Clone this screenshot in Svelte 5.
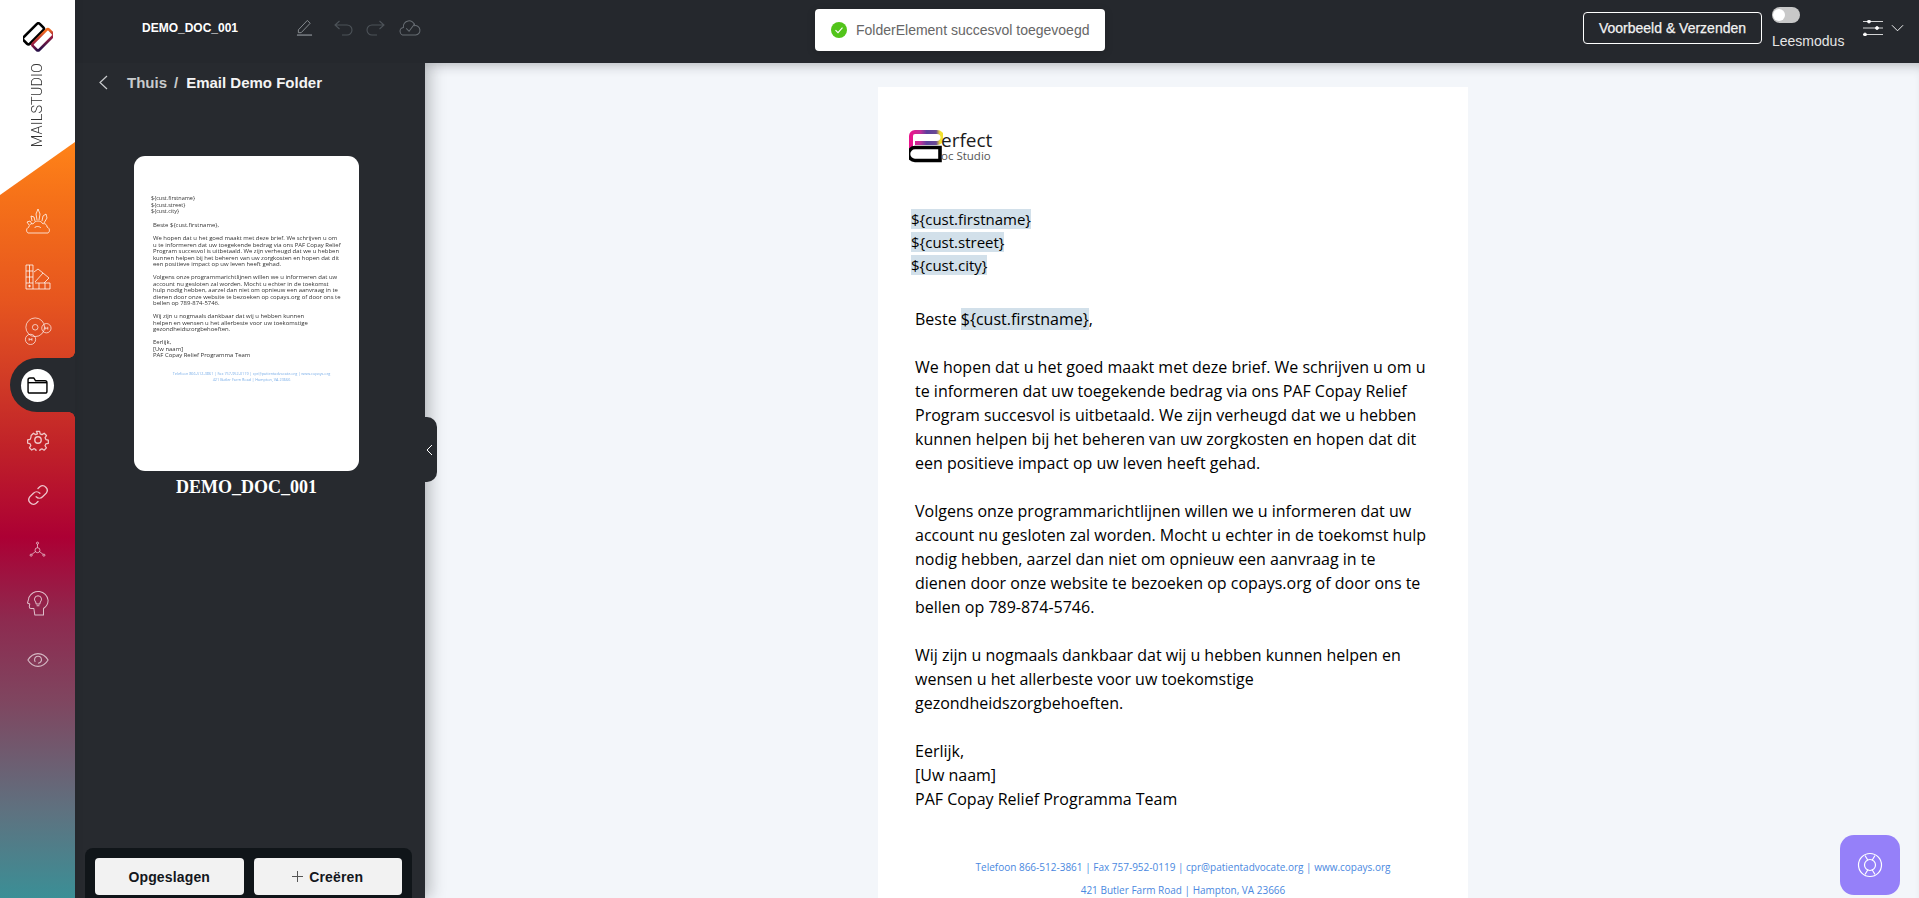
<script>
  const thumbParas = [
    ['Beste ${cust.firstname},'],
    ['We hopen dat u het goed maakt met deze brief. We schrijven u om','u te informeren dat uw toegekende bedrag via ons PAF Copay Relief','Program succesvol is uitbetaald. We zijn verheugd dat we u hebben','kunnen helpen bij het beheren van uw zorgkosten en hopen dat dit','een positieve impact op uw leven heeft gehad.'],
    ['Volgens onze programmarichtlijnen willen we u informeren dat uw','account nu gesloten zal worden. Mocht u echter in de toekomst','hulp nodig hebben, aarzel dan niet om opnieuw een aanvraag in te','dienen door onze website te bezoeken op copays.org of door ons te','bellen op 789-874-5746.'],
    ['Wij zijn u nogmaals dankbaar dat wij u hebben kunnen','helpen en wensen u het allerbeste voor uw toekomstige','gezondheidszorgbehoeften.'],
    ['Eerlijk,','[Uw naam]','PAF Copay Relief Programma Team']
  ];
  const docParas = [
    ['We hopen dat u het goed maakt met deze brief. We schrijven u om u','te informeren dat uw toegekende bedrag via ons PAF Copay Relief','Program succesvol is uitbetaald. We zijn verheugd dat we u hebben','kunnen helpen bij het beheren van uw zorgkosten en hopen dat dit','een positieve impact op uw leven heeft gehad.'],
    ['Volgens onze programmarichtlijnen willen we u informeren dat uw','account nu gesloten zal worden. Mocht u echter in de toekomst hulp','nodig hebben, aarzel dan niet om opnieuw een aanvraag in te','dienen door onze website te bezoeken op copays.org of door ons te','bellen op 789-874-5746.'],
    ['Wij zijn u nogmaals dankbaar dat wij u hebben kunnen helpen en','wensen u het allerbeste voor uw toekomstige','gezondheidszorgbehoeften.'],
    ['Eerlijk,','[Uw naam]','PAF Copay Relief Programma Team']
  ];
</script>

<div class="app">
  <aside class="rail">
    <div class="brand">
      <svg class="logo" viewBox="0 0 30 30" width="30" height="30" fill="none">
        <defs><linearGradient id="lg" x1="0.1" y1="1" x2="1" y2="0.2"><stop offset="0" stop-color="#2a1048"/><stop offset="0.5" stop-color="#9a1a40"/><stop offset="1" stop-color="#f06a20"/></linearGradient></defs>
        <g transform="rotate(-45 15 15)">
          <rect x="2.500" y="5" width="23" height="9" rx="2" stroke="#000" stroke-width="2.600"/>
          <rect x="5" y="16" width="23" height="9" rx="2" stroke="url(#lg)" stroke-width="2.600"/>
        </g>
      </svg>
      <span class="brand-text">MAILSTUDIO</span>
    </div>
    <div class="rail-fill">
      <nav class="icons">
        <svg class="ic" viewBox="0 0 26 26" fill="none" stroke="#fff" stroke-opacity=".85" stroke-width=".9"><path d="M3 25h20c2-1 2-5-1-6 0-3-3-4-4-3-1-2-3-3-5-3s-4 1-5 3c-2-1-4 1-4 3-3 1-3 5-1 6Z"/><path d="M9.500 20c1-2 5-2 6.500 0"/><path d="M7 13 6 8l3 1 1 4M12 12l-1-6 2-5 2 5-1 6M17 13l1-5 3-2 1 4-3 5M4 17l-2-3 3-1 2 3"/></svg>
        <svg class="ic" viewBox="0 0 26 26" fill="none" stroke="#fff" stroke-opacity=".85" stroke-width=".9"><path d="M1 1h7v24H1zM1 7h7M1 13h7M1 19h7M4.500 1v18"/><path d="M9 8l4-3 5 4-8 9M18 9l6 5-5 5"/><path d="M10 19h15v6H8M14 19v6M20 19v6"/><circle cx="4.500" cy="22" r=".8" fill="#fff"/></svg>
        <svg class="ic mol" viewBox="0 0 30 30" fill="none" stroke="#fff" stroke-opacity=".8" stroke-width=".9"><circle cx="12" cy="11" r="10"/><circle cx="12" cy="11" r="3"/><circle cx="24" cy="12" r="5"/><circle cx="7" cy="24" r="5.500"/><path d="M22.500 10.500v3M25.500 10.500v3M22.500 12h3M5.500 22.500v3M8.500 22.500v3M5.500 24h3"/></svg>
      </nav>
      <div class="active-wrap">
        <div class="active-pill">
          <span class="active-dot">
            <svg viewBox="0 0 22 18" width="21" height="17" fill="none" stroke="#000" stroke-width="1.500" stroke-linejoin="round"><path d="M1 3a2 2 0 0 1 2-2h4l2 3h10a2 2 0 0 1 2 2v9a2 2 0 0 1-2 2H3a2 2 0 0 1-2-2Z"/><path d="M1 6h20"/></svg>
          </span>
        </div>
      </div>
      <nav class="icons lower">
        <svg class="ic" viewBox="0 0 24 24" fill="none" stroke="#fff" stroke-opacity=".75" stroke-width="1.500" stroke-linejoin="round"><circle cx="12" cy="12" r="3.500"/><path d="M10 1.500h4l.6 3 2.300 1 2.600-1.700 2.800 2.800-1.700 2.600 1 2.300 2.900.6v4l-3 .6-1 2.300 1.700 2.600-2.800 2.800-2.600-1.700-2.300 1-.6 2.800h-4l-.6-3-2.300-1-2.600 1.700-2.800-2.800 1.700-2.600-1-2.300-2.900-.6v-4l3-.6 1-2.300L3.700 6.600l2.800-2.800 2.600 1.700 2.300-1Z" transform="translate(1.200 1.200) scale(.9)"/></svg>
        <svg class="ic" viewBox="0 0 24 24" fill="none" stroke="#fff" stroke-opacity=".75" stroke-width="1.500" stroke-linecap="round"><path d="M10 14a5 5 0 0 0 7 0l4-4a5 5 0 0 0-7-7l-2 2"/><path d="M14 10a5 5 0 0 0-7 0l-4 4a5 5 0 0 0 7 7l2-2"/></svg>
        <svg class="ic small" viewBox="0 0 24 24" fill="none" stroke="#fff" stroke-opacity=".6" stroke-width="1.400"><circle cx="12" cy="13" r="3.500"/><circle cx="12" cy="3" r="1.500"/><circle cx="3" cy="20" r="1.500"/><circle cx="21" cy="20" r="1.500"/><path d="M12 4.500v5M9 15l-5 4M15 15l5 4"/></svg>
        <svg class="ic head" viewBox="0 0 24 28" fill="none" stroke="#fff" stroke-opacity=".7" stroke-width="1.100" stroke-linejoin="round"><path d="M18 27v-7c3-2 5-5 5-9A11 11 0 0 0 2 8c0 2-1 4-1.500 6l2.500 1-.5 3c0 1 1 2 2 2h3l1 7Z"/><path d="M12 6a4 4 0 0 1 2.500 7l-.5 2h-4l-.5-2A4 4 0 0 1 12 6ZM10.500 17h3"/></svg>
        <svg class="ic" viewBox="0 0 24 24" fill="none" stroke="#fff" stroke-opacity=".65" stroke-width="1.200"><path d="M1 12c3-5 7-7 11-7s8 2 11 7c-3 5-7 7-11 7S4 17 1 12Z"/><path d="M9 14a3.800 3.800 0 1 1 3 1.500"/></svg>
      </nav>
    </div>
  </aside>

  <div class="workspace">
    <header class="topbar">
      <div class="doc-name">DEMO_DOC_001</div>
      <div class="tools">
        <svg class="t-edit" viewBox="0 0 18 18" width="17" height="17" fill="none" stroke="#8b9095" stroke-width="1"><path d="M2.500 12.500 12 2.500l3 3-9.500 10H2.500Z" transform="translate(0 -1)"/><path d="M1 17h16" stroke-width="1.300"/></svg>
        <svg class="t-undo" viewBox="0 0 19 16" width="19" height="16" fill="none" stroke="#4d5359" stroke-width="1.100"><path d="M5.500 1 1 5l4.500 4M1 5h12a5 5 0 0 1 0 10H8"/></svg>
        <svg class="t-redo" viewBox="0 0 19 16" width="19" height="16" fill="none" stroke="#4d5359" stroke-width="1.100"><path d="M13.500 1 18 5l-4.500 4M18 5H6a5 5 0 0 0 0 10h5"/></svg>
        <svg class="t-cloud" viewBox="0 0 22 18" width="22" height="17" fill="none" stroke="#676d73" stroke-width="1.100"><path d="M5 17a4 4 0 0 1-1-8 6 6 0 0 1 12-2 5 5 0 0 1 1 10Z"/><path d="m7 10 3 3 6-8" /></svg>
      </div>
      <div class="top-right">
        <button class="preview">Voorbeeld &amp; Verzenden</button>
        <div class="read">
          <span class="toggle"><span class="knob"></span></span>
          <span class="read-label">Leesmodus</span>
        </div>
        <div class="filters">
          <svg viewBox="0 0 20 16" width="20" height="16" fill="none" stroke="#fff" stroke-width=".8"><path d="M0 1.500h20M0 8h20M0 14.500h20"/><circle cx="6" cy="1.500" r="1.500" fill="#fff"/><circle cx="14" cy="8" r="1.500" fill="#fff"/><circle cx="2" cy="14.500" r="1.500" fill="#fff"/></svg>
          <svg viewBox="0 0 14 8" width="13" height="8" fill="none" stroke="#fff" stroke-width="1"><path d="M1 1l6 6 6-6"/></svg>
        </div>
      </div>
    </header>

    <div class="body">
      <section class="panel">
        <div class="crumbs">
          <svg viewBox="0 0 10 15" width="10" height="15" fill="none" stroke="#c9cbcd" stroke-width="1.200"><path d="M9 1 2 7.500 9 14"/></svg>
          <span class="home">Thuis</span>
          <span class="sep">/</span>
          <span class="here">Email Demo Folder</span>
        </div>
        <article class="card">
          <div class="thumb">
            <p class="t-addr">{'${cust.firstname}'}<br />{'${cust.street}'}<br />{'${cust.city}'}</p>
            {#each thumbParas as para}
              <p class="t-para">{#each para as line}{line}<br />{/each}</p>
            {/each}
            <p class="t-foot">Telefoon 866-512-3861 | Fax 757-952-0119 | cpr@patientadvocate.org | www.copays.org<br />421 Butler Farm Road | Hampton, VA 23666</p>
          </div>
          <div class="card-title">DEMO_DOC_001</div>
        </article>
        <div class="actions">
          <button class="act">Opgeslagen</button>
          <button class="act"><span class="plus"></span>Creëren</button>
        </div>
        <button class="handle" aria-label="inklappen">
          <svg viewBox="0 0 7 12" width="7" height="12" fill="none" stroke="#fff" stroke-width="1"><path d="M6 1 1 6l5 5"/></svg>
        </button>
      </section>

      <main class="main">
        <div class="doc">
          <div class="doc-logo">
            <svg viewBox="0 0 34 33" width="34" height="33" fill="none">
              <defs><linearGradient id="pg" x1="0" y1="0" x2="1" y2="0"><stop offset="0" stop-color="#e8148c"/><stop offset=".3" stop-color="#c0309a"/><stop offset=".5" stop-color="#5b3f9c"/><stop offset=".8" stop-color="#6a4a94"/><stop offset=".92" stop-color="#f2e030"/></linearGradient></defs>
              <path d="M2 18V6a4 4 0 0 1 4-4h22a5.500 5.500 0 0 1 0 11H6" stroke="url(#pg)" stroke-width="4"/>
              <path d="M31 18H6a5.500 5.500 0 0 0 0 13h25Z" stroke="#000" stroke-width="3.600" transform="translate(0 -.500)"/>
            </svg>
            <div class="logo-words">
              <div class="lw1">erfect</div>
              <div class="lw2">oc Studio</div>
            </div>
          </div>
          <p class="addr"><mark>{'${cust.firstname}'}</mark><br /><mark>{'${cust.street}'}</mark><br /><mark>{'${cust.city}'}</mark></p>
          <div class="letter">
            <p>Beste <mark>{'${cust.firstname}'}</mark>,</p>
            {#each docParas as para}
              <p>{#each para as line}{line}<br />{/each}</p>
            {/each}
          </div>
          <div class="foot">
            <div>Telefoon 866-512-3861 | Fax 757-952-0119 | cpr@patientadvocate.org | www.copays.org</div>
            <div>421 Butler Farm Road | Hampton, VA 23666</div>
          </div>
        </div>
      </main>
    </div>
  </div>

  <div class="toast">
    <svg viewBox="0 0 16 16" width="16" height="16"><circle cx="8" cy="8" r="8" fill="#52c41a"/><path d="M4.500 8.200 7 10.700l4.500-5" fill="none" stroke="#fff" stroke-width="1.100"/></svg>
    <span>FolderElement succesvol toegevoegd</span>
  </div>

  <button class="help" aria-label="Help">
    <svg viewBox="0 0 26 26" width="26" height="26" fill="none" stroke="#fff" stroke-width="1.200"><circle cx="13" cy="13" r="11.500"/><circle cx="13" cy="13" r="5.500"/><path d="M8 3.500l3 5M18 3.500l-3 5M8 22.500l3-5M18 22.500l-3-5"/></svg>
  </button>
</div>

<style>
  :global(body) { margin: 0; background: #f3f6fa; }
  .app { position: relative; display: flex; width: 1919px; height: 898px; overflow: hidden; font-family: "Liberation Sans", Arial, sans-serif; }
  p { margin: 0; }
  button { font-family: inherit; cursor: pointer; }

  .rail { width: 75px; flex: none; display: flex; flex-direction: column; position: relative; background: #fff; z-index: 3; box-shadow: 2px 0 6px rgba(30,34,40,.2); }
  .brand { height: 195px; flex: none; display: flex; flex-direction: column; align-items: center; padding-top: 22px; box-sizing: border-box; }
  .logo { flex: none; }
  .brand-text { writing-mode: vertical-rl; transform: rotate(180deg); font-family: Roboto, "Liberation Sans", sans-serif; font-weight: 300; font-size: 14.500px; color: #333; margin-top: 11px; letter-spacing: .1px; }
  .rail-fill { position: absolute; inset: 142px 0 0 0; clip-path: polygon(0 53px, 100% 0, 100% 100%, 0 100%); background: linear-gradient(180deg, #ff8318 0, #f57019 60px, #e6551f 160px, #d03a26 240px, #bf2029 310px, #ac0034 395px, #8d2b50 480px, #7f4660 560px, #5e7280 670px, #3b8f96 756px); display: flex; flex-direction: column; }
  .icons { display: flex; flex-direction: column; align-items: center; padding-top: 66px; gap: 30px; height: 216px; box-sizing: border-box; flex: none; }
  .ic { width: 26px; height: 26px; display: block; flex: none; }
  .mol { width: 28px; height: 28px; margin-top: -3px; }
  .active-wrap { height: 54px; position: relative; flex: none; }
  .active-pill { position: absolute; left: 10px; right: 0; top: 0; height: 54px; background: #272a2f; border-radius: 27px 0 0 27px; display: flex; align-items: center; padding-left: 11px; box-sizing: border-box; }
  .active-pill::before, .active-pill::after { content: ""; position: absolute; right: 0; width: 6px; height: 6px; background: radial-gradient(circle at 0 0, transparent 5.500px, #272a2f 6px); }
  .active-pill::before { top: -6px; }
  .active-pill::after { bottom: -6px; background: radial-gradient(circle at 0 100%, transparent 5.500px, #272a2f 6px); }
  .active-dot { width: 33px; height: 33px; border-radius: 50%; background: #fff; display: flex; align-items: center; justify-content: center; }
  .icons.lower { height: auto; padding-top: 17px; gap: 33px; }
  .icons.lower .ic { width: 22px; height: 22px; }
  .icons.lower .small { width: 17px; height: 17px; margin-top: 2px; }
  .icons.lower .head { height: 26px; width: 22px; margin-top: -1px; }

  .workspace { flex: 1; display: flex; flex-direction: column; min-width: 0; }
  .topbar { height: 63px; flex: none; background: #25282d; display: flex; align-items: center; position: relative; z-index: 2; }
  .doc-name { margin-left: 67px; width: 154px; color: #fff; font-size: 12px; font-weight: 700; margin-top: -8px; }
  .tools { display: flex; align-items: center; margin-top: -8px; }
  .t-undo { margin-left: 21px; }
  .t-redo { margin-left: 13px; }
  .t-cloud { margin-left: 14px; }
  .top-right { margin-left: auto; display: flex; align-items: flex-start; height: 63px; }
  .preview { width: 179px; height: 32px; margin-top: 12px; box-sizing: border-box; background: transparent; border: 1px solid #fff; border-radius: 4px; color: #f2f2f2; font-size: 14px; font-weight: 400; padding: 0; -webkit-text-stroke: .25px #f2f2f2; }
  .read { margin-left: 10px; width: 91px; display: flex; flex-direction: column; }
  .toggle { width: 28px; height: 16px; margin-top: 7px; background: #c8c8c8; border-radius: 8px; display: block; position: relative; }
  .knob { position: absolute; left: 1px; top: 2px; width: 12px; height: 12px; border-radius: 50%; background: #fff; }
  .read-label { color: #e6e6e6; font-size: 14px; margin-top: 10px; line-height: 16px; }
  .filters { width: 56px; display: flex; align-items: center; gap: 8px; margin-top: 20px; }

  .body { flex: 1; display: flex; min-height: 0; }
  .panel { width: 350px; flex: none; position: relative; background: #272a2f; box-shadow: 6px 0 14px rgba(30, 34, 40, .25); z-index: 1; }
  .crumbs { display: flex; align-items: center; height: 38px; padding-left: 23px; font-size: 15px; font-weight: 700; }
  .home { color: #c8cacc; margin-left: 19px; }
  .sep { color: #c8cacc; margin: 0 8px 0 7px; }
  .here { color: #f4f4f4; }
  .card { margin: 55px 0 0 59px; width: 225px; }
  .thumb { height: 315px; box-sizing: border-box; background: #fff; border-radius: 11px; padding: 39px 0 0 17px; font-family: "Open Sans", sans-serif; font-size: 5.950px; line-height: 6.500px; color: #333; white-space: nowrap; overflow: hidden; }
  .t-addr, .t-para, .t-foot { filter: blur(.25px); }
  .t-addr { margin-bottom: 7.500px; font-size: 5.500px; }
  .t-para { padding-left: 2px; margin-bottom: 6.500px; }
  .t-foot { margin-top: 12px; text-align: center; color: #7aaee8; font-size: 3.800px; margin-left: -4px; width: 209px; }
  .card-title { font-family: "Liberation Serif", serif; font-weight: 700; color: #fff; font-size: 18px; text-align: center; margin-top: 6px; line-height: 20px; }
  .actions { position: absolute; left: 10px; bottom: 0; width: 327px; height: 50px; box-sizing: border-box; background: #101519; border-radius: 8px 8px 0 0; display: flex; gap: 10px; padding: 10px 10px 3px; }
  .act { flex: 1; border: 0; border-radius: 4px; background: #f2f2f2; color: #14171c; font-size: 14px; font-weight: 700; letter-spacing: .15px; display: flex; align-items: center; justify-content: center; padding: 0; }
  .plus { width: 11px; height: 11px; margin-right: 6px; background: linear-gradient(#555, #555) center / 100% 1.300px no-repeat, linear-gradient(#555, #555) center / 1.300px 100% no-repeat; }
  .handle { position: absolute; left: 100%; top: 354px; width: 12px; height: 65px; background: #272a2f; border: 0; border-radius: 0 10px 10px 0; padding: 0 4px 0 0; display: flex; align-items: center; justify-content: center; }

  .main { flex: 1; min-width: 0; overflow: hidden; padding-top: 24px; box-shadow: inset 0 10px 12px -8px rgba(30, 34, 40, .3); }
  .doc { width: 590px; margin: 0 451px 0 453px; background: #fff; padding: 43px 0 0 33px; box-sizing: border-box; height: 900px; font-family: "Open Sans", sans-serif; font-size: 16px; line-height: 24px; color: #000; white-space: nowrap; }
  mark { background: #d2e0ea; color: inherit; }
  .doc-logo { display: flex; height: 32px; margin-left: -2px; }
  .logo-words { color: #222; margin-left: -2px; }
  .lw1 { font-size: 19px; line-height: 20px; color: #1c1c1c; }
  .lw2 { font-size: 11.500px; line-height: 12px; color: #555; }
  .addr { margin-top: 46px; font-size: 15px; line-height: 23px; }
  .letter { margin-top: 30px; padding-left: 4px; }
  .letter p { margin-bottom: 24px; }
  .foot { text-align: center; font-size: 10px; line-height: 23px; color: #4a88e0; margin-left: -13px; margin-top: 45px; }

  .toast { position: absolute; left: 815px; top: 9px; width: 290px; height: 42px; box-sizing: border-box; background: #fff; border-radius: 4px; display: flex; align-items: center; padding-left: 16px; gap: 9px; color: #666; font-size: 14px; z-index: 5; box-shadow: 0 2px 8px rgba(0,0,0,.15); }
  .help { position: absolute; left: 1840px; top: 835px; width: 60px; height: 60px; border: 0; border-radius: 14px; background: #9580f9; display: flex; align-items: center; justify-content: center; padding: 0; z-index: 5; }
</style>
